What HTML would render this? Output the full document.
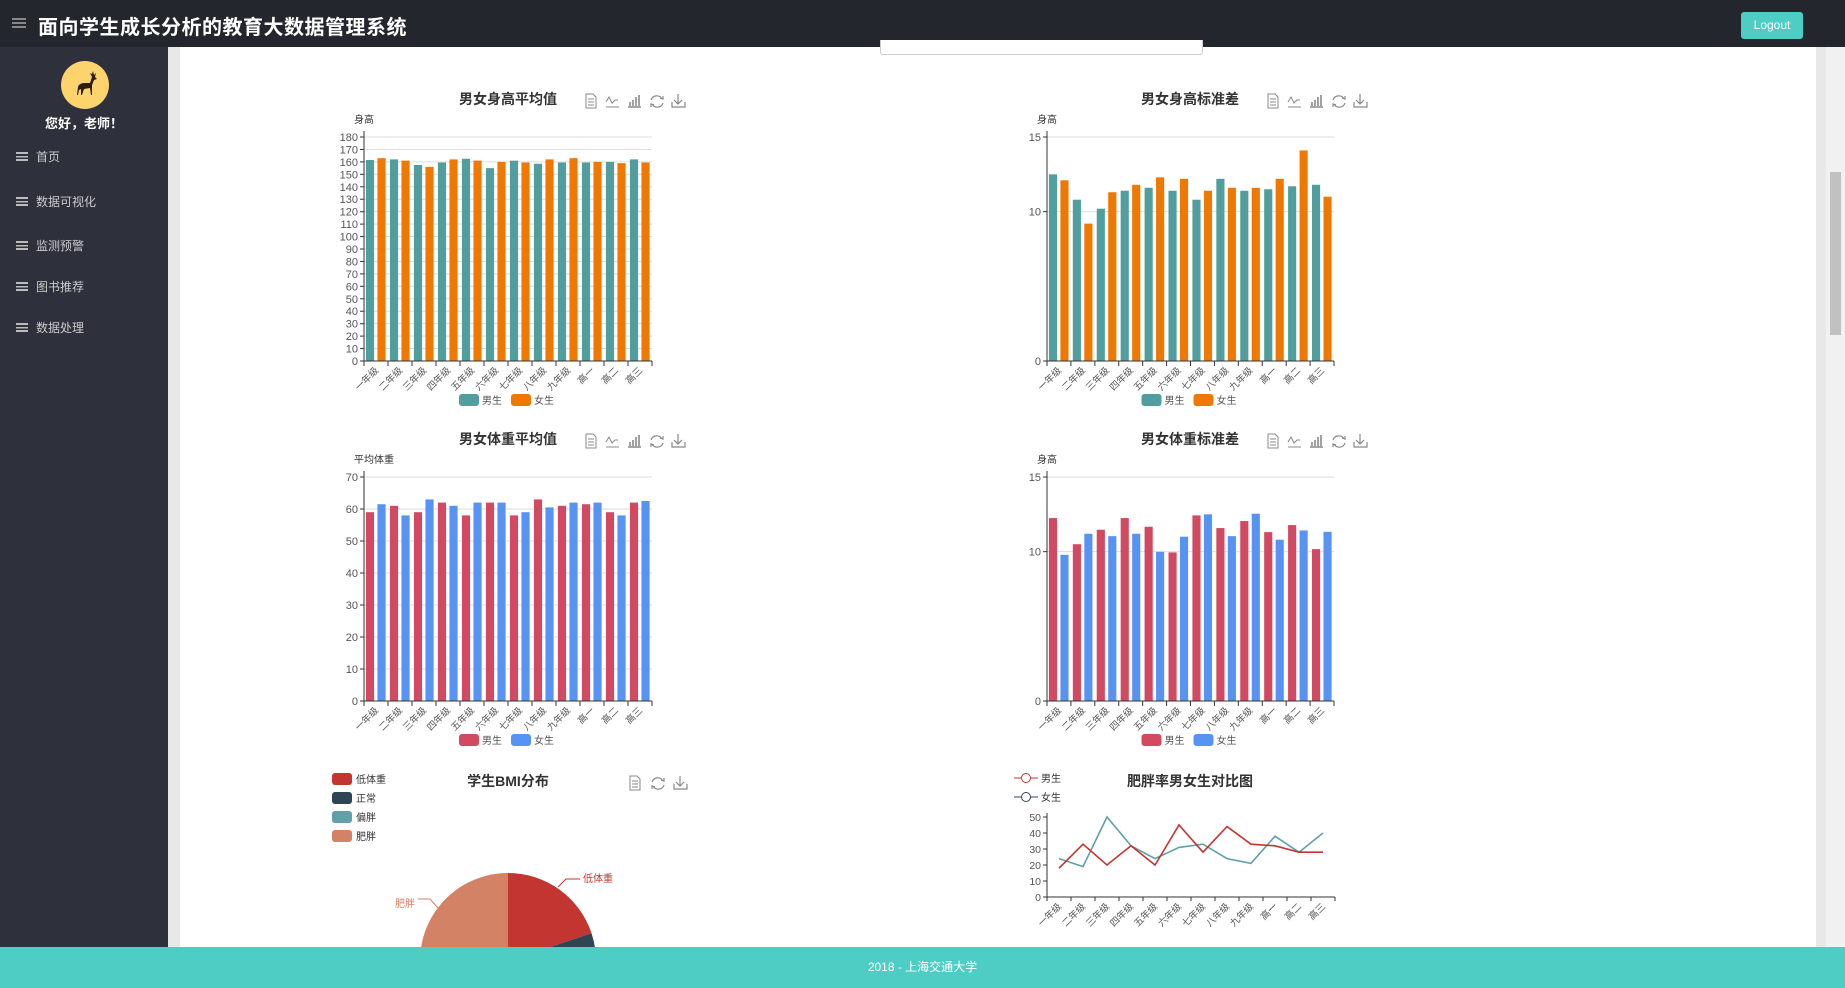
<!DOCTYPE html>
<html><head><meta charset="utf-8">
<style>
*{margin:0;padding:0;box-sizing:border-box}
body{width:1845px;height:988px;overflow:hidden;background:#e8e8e8;font-family:"Liberation Sans","Noto Sans CJK SC",sans-serif;position:relative}
#hdr{position:absolute;left:0;top:0;width:1845px;height:47px;background:#23262c}
#hdr .t{position:absolute;left:38px;top:11px;color:#fff;font-size:20px;font-weight:bold;letter-spacing:0.5px}
#hdr .hb{position:absolute;left:12px;top:18px;width:14px;height:2px;background:#888;box-shadow:0 4px 0 #888,0 8px 0 #888}
#logout{position:absolute;left:1741px;top:12px;width:62px;height:27px;background:#4ecdc4;border-radius:3px;color:#fff;font-size:12px;text-align:center;line-height:27px}
#side{position:absolute;left:0;top:47px;width:168px;height:900px;background:#2e313b}
.av{position:absolute;left:61px;top:14px;width:48px;height:48px;border-radius:50%;background:#fdd36d}
.hi{position:absolute;left:0;width:168px;top:66px;text-align:center;color:#fff;font-weight:bold;font-size:13px}
.mi{position:absolute;left:16px;color:#ccc;font-size:12px}
.mi i{display:inline-block;width:12px;height:9px;border-top:2px solid #bbb;border-bottom:2px solid #bbb;background:linear-gradient(#bbb,#bbb) 0 2px/12px 1.5px no-repeat;margin-right:8px;vertical-align:0}
#main{position:absolute;left:180px;top:47px;width:1636px;height:900px;background:#fff}
#sb{position:absolute;left:1826px;top:47px;width:19px;height:900px;background:#f1f1f1}
#sb div{position:absolute;left:4px;top:125px;width:11px;height:163px;background:#c1c1c1}
#srch{position:absolute;left:880px;top:40px;width:323px;height:15px;border:1px solid #ccc;border-top:none;border-radius:0 0 3px 3px;background:#fff}
#foot{position:absolute;left:0;top:947px;width:1845px;height:41px;background:#4ecdc4;color:#fff;font-size:12px;text-align:center;line-height:41px}
svg text{font-family:"Liberation Sans","Noto Sans CJK SC",sans-serif}
</style></head><body>
<div id="hdr"><div class="hb"></div><div class="t">面向学生成长分析的教育大数据管理系统</div><div id="logout">Logout</div></div>
<div id="side">
<div class="av"><svg width="48" height="48" viewBox="0 0 48 48"><path d="M16 34 L17 26 Q18 22 24 22 L29 22 L31 16 L29 12 L31 13 L32 10 L33 14 L35 12 L34 16 L36 18 L33 19 L31 24 L31 34 L30 34 L29 27 L23 28 L21 34 L20 34 L20 28 L18 29 L17 34Z" fill="#2b1d10"/></svg></div>
<div class="hi">您好，老师！</div>
<div class="mi" style="top:101px"><i></i>首页</div>
<div class="mi" style="top:146px"><i></i>数据可视化</div>
<div class="mi" style="top:190px"><i></i>监测预警</div>
<div class="mi" style="top:231px"><i></i>图书推荐</div>
<div class="mi" style="top:272px"><i></i>数据处理</div>
</div>
<div id="main"></div>
<div id="srch"></div>
<div id="sb"><div></div></div>
<svg id="ch" width="1845" height="947" style="position:absolute;left:0;top:0;overflow:hidden"></svg>
<div id="foot">2018 - 上海交通大学</div>
<script>
var cats=["一年级","二年级","三年级","四年级","五年级","六年级","七年级","八年级","九年级","高一","高二","高三"];
var s="";
function T(x,y,t,o){o=o||{};s+='<text x="'+x+'" y="'+y+'" font-size="'+(o.fs||11)+'" fill="'+(o.c||'#555')+'" text-anchor="'+(o.a||'start')+'"'+(o.b?' font-weight="bold"':'')+(o.tr?' transform="'+o.tr+'"':'')+'>'+t+'</text>';}
function L(x1,y1,x2,y2,c,w){s+='<line x1="'+x1+'" y1="'+y1+'" x2="'+x2+'" y2="'+y2+'" stroke="'+c+'" stroke-width="'+(w||1)+'"/>';}
function R(x,y,w,h,c,r){s+='<rect x="'+x+'" y="'+y+'" width="'+w+'" height="'+h+'" fill="'+c+'"'+(r?' rx="'+r+'"':'')+'/>';}
function icons(x,y,n){var g='#888';var xs=n==5?[0,20,42,65,86]:[0,22,44];var k=n==5?['doc','line','bar','ref','dl']:['doc','ref','dl'];
 k.forEach(function(t,i){var X=x+xs[i];
 if(t=='doc'){s+='<path d="M'+(X)+' '+(y-7)+'h7l3 3v11h-10z M'+(X+2)+' '+(y-2)+'h6 M'+(X+2)+' '+(y+1)+'h6 M'+(X+2)+' '+(y+4)+'h6" fill="none" stroke="'+g+'" stroke-width="1"/>';}
 if(t=='line'){s+='<path d="M'+X+' '+(y+1)+'l3 -5l3 6l3 -3h3 M'+X+' '+(y+6)+'h13" fill="none" stroke="'+g+'"/>';}
 if(t=='bar'){s+='<path d="M'+X+' '+(y+6)+'h13 M'+(X+2)+' '+(y+5)+'v-4 M'+(X+5)+' '+(y+5)+'v-6 M'+(X+8)+' '+(y+5)+'v-9 M'+(X+11)+' '+(y+5)+'v-11" fill="none" stroke="'+g+'" stroke-width="1.6"/>';}
 if(t=='ref'){s+='<path d="M'+(X+11)+' '+(y-2)+'a6 6 0 0 0 -11 1 M'+(X+1)+' '+(y+3)+'a6 6 0 0 0 11 -1 M'+(X+9)+' '+(y-3)+'l3 1l0 -3 M'+(X+3)+' '+(y+4)+'l-3 -1l0 3" fill="none" stroke="'+g+'" stroke-width="1.2"/>';}
 if(t=='dl'){s+='<path d="M'+(X+6)+' '+(y-7)+'v10 M'+(X+2)+' '+(y-1)+'l4 4l4 -4 M'+X+' '+(y+1)+'v5h13v-5" fill="none" stroke="'+g+'" stroke-width="1.2"/>';}
 });}
function bar(o){var W=o.R-o.L,H=o.B-o.T,bw=W/12,w=bw*0.34;
 o.ticks.forEach(function(v){var y=o.B-v/o.max*H;if(v>0)L(o.L,y,o.R,y,'#ddd');L(o.L-4,y,o.L,y,'#333');T(o.L-6,y+4,v,{a:'end',fs:11});});
 for(var i=0;i<12;i++){var x0=o.L+i*bw;
  var h1=o.d1[i]/o.max*H,h2=o.d2[i]/o.max*H;
  R(x0+bw*0.08,o.B-h1,w,h1,o.c1);R(x0+bw*0.56,o.B-h2,w,h2,o.c2);
  L(x0,o.B,x0,o.B+5,'#333');
  var cx=x0+bw/2+3;T(cx,o.B+10,cats[i],{a:'end',fs:9.5,tr:'rotate(-45 '+cx+' '+(o.B+10)+')'});}
 L(o.R,o.B,o.R,o.B+5,'#333');
 L(o.L,o.T-6,o.L,o.B,'#333');L(o.L,o.B,o.R,o.B,'#333');
 T(o.L-10,o.T-14,o.name,{fs:10,c:'#333'});
 var cx=(o.L+o.R)/2-2;
 T(o.tx,o.T-33,o.title,{a:'middle',fs:14,b:1,c:'#333'});icons(o.tx+78,o.T-36,5);
 var ly=o.B+39;R(cx-47,ly-6,20,12,o.c1,3);T(cx-24,ly+4,'男生',{fs:10});R(cx+5,ly-6,20,12,o.c2,3);T(cx+28,ly+4,'女生',{fs:10});
}
var t180=[];for(var v=0;v<=180;v+=10)t180.push(v);var t70=[];for(v=0;v<=70;v+=10)t70.push(v);
bar({L:364,R:652,T:137,B:361,max:180,ticks:t180,name:'身高',title:'男女身高平均值',tx:508,c1:'#519e9e',c2:'#ee7800',
 d1:[161.5,162,157.5,159.5,162.5,155,161,158.5,159.5,159.5,160,162],d2:[163,161,156,162,161,160,159.5,162,163,160,159,159.5]});
bar({L:1047,R:1334,T:137,B:361,max:15,ticks:[0,10,15],name:'身高',title:'男女身高标准差',tx:1190,c1:'#519e9e',c2:'#ee7800',
 d1:[12.5,10.8,10.2,11.4,11.6,11.4,10.8,12.2,11.4,11.5,11.7,11.8],d2:[12.1,9.2,11.3,11.8,12.3,12.2,11.4,11.6,11.6,12.2,14.1,11.0]});
bar({L:364,R:652,T:477,B:701,max:70,ticks:t70,name:'平均体重',title:'男女体重平均值',tx:508,c1:'#d14a61',c2:'#5793f3',
 d1:[59,61,59,62,58,62,58,63,61,61.5,59,62],d2:[61.5,58,63,61,62,62,59,60.5,62,62,58,62.5]});
bar({L:1047,R:1334,T:477,B:701,max:15,ticks:[0,10,15],name:'身高',title:'男女体重标准差',tx:1190,c1:'#d14a61',c2:'#5793f3',
 d1:[12.25,10.5,11.47,12.25,11.67,9.95,12.43,11.58,12.05,11.31,11.78,10.17],d2:[9.79,11.2,11.04,11.2,9.99,11.0,12.5,11.04,12.54,10.8,11.42,11.33]});
// BMI
T(508,786,'学生BMI分布',{a:'middle',fs:14,b:1,c:'#333'});icons(630,783,3);
[['低体重','#c23531'],['正常','#2f4554'],['偏胖','#61a0a8'],['肥胖','#d48265']].forEach(function(p,i){var y=779+i*19;R(332,y-6,20,12,p[1],3);T(356,y+4,p[0],{fs:10,c:'#333'});});
var cx=508,cy=961,r=88;
function arc(a0,a1,c){var x0=cx+r*Math.sin(a0),y0=cy-r*Math.cos(a0),x1=cx+r*Math.sin(a1),y1=cy-r*Math.cos(a1);s+='<path d="M'+cx+' '+cy+'L'+x0+' '+y0+'A'+r+' '+r+' 0 '+((a1-a0)>Math.PI?1:0)+' 1 '+x1+' '+y1+'Z" fill="'+c+'"/>';}
arc(0,1.25,'#c23531');arc(1.25,2.9,'#2f4554');arc(2.9,4.2,'#61a0a8');arc(4.2,6.2832,'#d48265');
s+='<path d="M558 887 l8 -8 h14" fill="none" stroke="#c23531"/>';T(583,882,'低体重',{fs:10,c:'#c23531'});
s+='<path d="M438 908 l-8 -9 h-12" fill="none" stroke="#d48265"/>';T(415,907,'肥胖',{fs:10,c:'#d48265',a:'end'});
// line chart
var Lx=1047,Rx=1335,Tt=817,Bb=897,W=Rx-Lx,H=Bb-Tt;
T(1190,786,'肥胖率男女生对比图',{a:'middle',fs:14,b:1,c:'#333'});
[['男生','#c23531',778],['女生','#2f4554',797]].forEach(function(p){L(1014,p[2],1038,p[2],p[1]);s+='<circle cx="1026" cy="'+p[2]+'" r="4.5" fill="#fff" stroke="'+p[1]+'"/>';T(1041,p[2]+4,p[0],{fs:10,c:'#333'});});
[0,10,20,30,40,50].forEach(function(v){var y=Bb-v/50*H;L(Lx-4,y,Lx,y,'#333');T(Lx-6,y+4,v,{a:'end',fs:10.5});});
L(Lx,Tt-4,Lx,Bb,'#333');L(Lx,Bb,Rx,Bb,'#333');
var bw=W/12;for(var i=0;i<=12;i++)L(Lx+i*bw,Bb,Lx+i*bw,Bb+4,'#333');
for(i=0;i<12;i++){var x=Lx+i*bw+bw/2+3;T(x,Bb+10,cats[i],{a:'end',fs:9.5,tr:'rotate(-45 '+x+' '+(Bb+10)+')'});}
function pl(d,c){var p=d.map(function(v,i){return (Lx+i*bw+bw/2)+','+(Bb-v/50*H);}).join(' ');s+='<polyline points="'+p+'" fill="none" stroke="'+c+'" stroke-width="1.6"/>';}
pl([24,19,50,32,24,31,33,24,21,38,28,40],'#61a0a8');
pl([18,33,20,32,20,45,28,44,33,32,28,28],'#c23531');
document.getElementById('ch').innerHTML=s;
</script>
</body></html>
